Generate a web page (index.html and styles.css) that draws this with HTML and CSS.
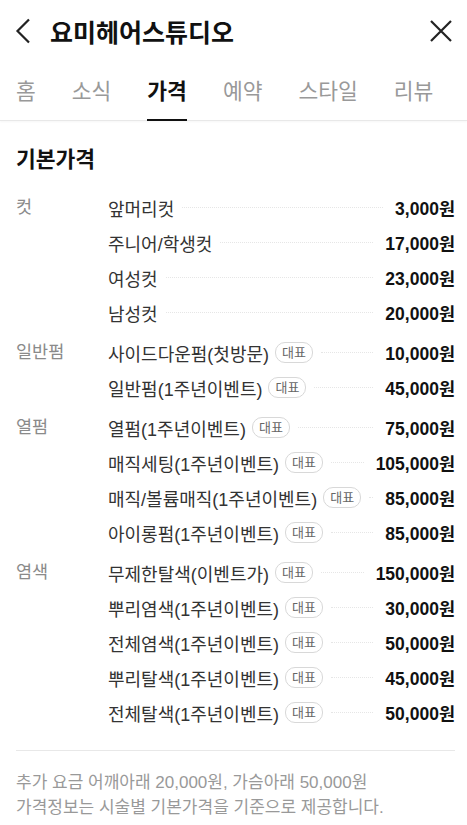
FILE: index.html
```html
<!DOCTYPE html>
<html lang="ko">
<head>
	<meta charset="utf-8">
	<link rel="stylesheet" href="styles.css">
</head>
<body>
	<div class="header">
		<svg class="icon back" viewBox="0 0 16 26" width="16" height="26"><path d="M14 1.5 L2.5 13 L14 24.5" fill="none" stroke="#222" stroke-width="2.2"/></svg>
		<h1>요미헤어스튜디오</h1>
		<svg class="icon close" viewBox="0 0 24 24" width="24" height="24"><path d="M2 2 L22 22 M22 2 L2 22" fill="none" stroke="#222" stroke-width="2.2"/></svg>
	</div>

	<div class="tabs">
		<span class="tab">홈</span>
		<span class="tab">소식</span>
		<span class="tab active">가격</span>
		<span class="tab">예약</span>
		<span class="tab">스타일</span>
		<span class="tab">리뷰</span>
	</div>

	<div class="content">
		<h2>기본가격</h2>

		<div class="group">
			<div class="category">컷</div>
			<div class="items">
				<div class="item"><span class="name">앞머리컷</span><span class="dots"></span><span class="price">3,000원</span></div>
				<div class="item"><span class="name">주니어/학생컷</span><span class="dots"></span><span class="price">17,000원</span></div>
				<div class="item"><span class="name">여성컷</span><span class="dots"></span><span class="price">23,000원</span></div>
				<div class="item"><span class="name">남성컷</span><span class="dots"></span><span class="price">20,000원</span></div>
			</div>
		</div>

		<div class="group">
			<div class="category">일반펌</div>
			<div class="items">
				<div class="item"><span class="name">사이드다운펌(첫방문)</span><span class="badge">대표</span><span class="dots"></span><span class="price">10,000원</span></div>
				<div class="item"><span class="name">일반펌(1주년이벤트)</span><span class="badge">대표</span><span class="dots"></span><span class="price">45,000원</span></div>
			</div>
		</div>

		<div class="group">
			<div class="category">열펌</div>
			<div class="items">
				<div class="item"><span class="name">열펌(1주년이벤트)</span><span class="badge">대표</span><span class="dots"></span><span class="price">75,000원</span></div>
				<div class="item"><span class="name">매직세팅(1주년이벤트)</span><span class="badge">대표</span><span class="dots"></span><span class="price">105,000원</span></div>
				<div class="item"><span class="name">매직/볼륨매직(1주년이벤트)</span><span class="badge">대표</span><span class="dots"></span><span class="price">85,000원</span></div>
				<div class="item"><span class="name">아이롱펌(1주년이벤트)</span><span class="badge">대표</span><span class="dots"></span><span class="price">85,000원</span></div>
			</div>
		</div>

		<div class="group">
			<div class="category">염색</div>
			<div class="items">
				<div class="item"><span class="name">무제한탈색(이벤트가)</span><span class="badge">대표</span><span class="dots"></span><span class="price">150,000원</span></div>
				<div class="item"><span class="name">뿌리염색(1주년이벤트)</span><span class="badge">대표</span><span class="dots"></span><span class="price">30,000원</span></div>
				<div class="item"><span class="name">전체염색(1주년이벤트)</span><span class="badge">대표</span><span class="dots"></span><span class="price">50,000원</span></div>
				<div class="item"><span class="name">뿌리탈색(1주년이벤트)</span><span class="badge">대표</span><span class="dots"></span><span class="price">45,000원</span></div>
				<div class="item"><span class="name">전체탈색(1주년이벤트)</span><span class="badge">대표</span><span class="dots"></span><span class="price">50,000원</span></div>
			</div>
		</div>

		<div class="notes">
			<p>추가 요금 어깨아래 20,000원, 가슴아래 50,000원</p>
			<p>가격정보는 시술별 기본가격을 기준으로 제공합니다.</p>
		</div>
	</div>
</body>
</html>
```

FILE: styles.css
```css
body {
	margin: 0;
	font-family: "Liberation Sans", "Noto Sans CJK KR", sans-serif;
	color: #222;
	background: #fff;
}

.header {
	display: flex;
	align-items: center;
	height: 62px;
	padding: 0 14px 0 15px;
}

.header h1 {
	flex: 1;
	margin: 0 0 0 19px;
	font-size: 25px;
	font-weight: bold;
	color: #111;
}

.icon {
	display: block;
}

.tabs {
	display: flex;
	gap: 36px;
	height: 58px;
	padding: 0 16px;
	border-bottom: 1px solid #e8e8e8;
	box-shadow: 0 1px 2px rgba(0, 0, 0, .04);
}

.tab {
	display: flex;
	align-items: center;
	padding-bottom: 2px;
	font-size: 21.5px;
	color: #999;
	border-bottom: 2px solid transparent;
	margin-bottom: -1px;
}

.tab.active {
	color: #111;
	font-weight: bold;
	border-bottom-color: #111;
}

.content {
	padding: 21px 12px 0 16px;
}

.content h2 {
	margin: 0 0 17px;
	font-size: 21.5px;
	font-weight: bold;
	color: #111;
}

.group {
	display: flex;
	margin-bottom: 5px;
}

.category {
	width: 92px;
	font-size: 17.5px;
	line-height: 35px;
	color: #8a8a8a;
}

.items {
	flex: 1;
}

.item {
	display: flex;
	align-items: center;
	height: 35px;
	font-size: 18px;
	color: #333;
}

.badge {
	margin-left: 6px;
	padding: 0 6px;
	height: 19px;
	line-height: 19px;
	font-size: 13px;
	color: #666;
	border: 1px solid #d8d8d8;
	border-radius: 10px;
}

.dots {
	flex: 1;
	margin: 0 12px 0 8px;
	border-top: 1px dotted #e6e6e6;
}

.price {
	font-weight: bold;
	font-size: 17.5px;
	color: #111;
}

.notes {
	margin-top: 20px;
	border-top: 1px solid #e8e8e8;
	padding-top: 19px;
}

.notes p {
	margin: 0;
	font-size: 17px;
	line-height: 25px;
	color: #999;
}
```
